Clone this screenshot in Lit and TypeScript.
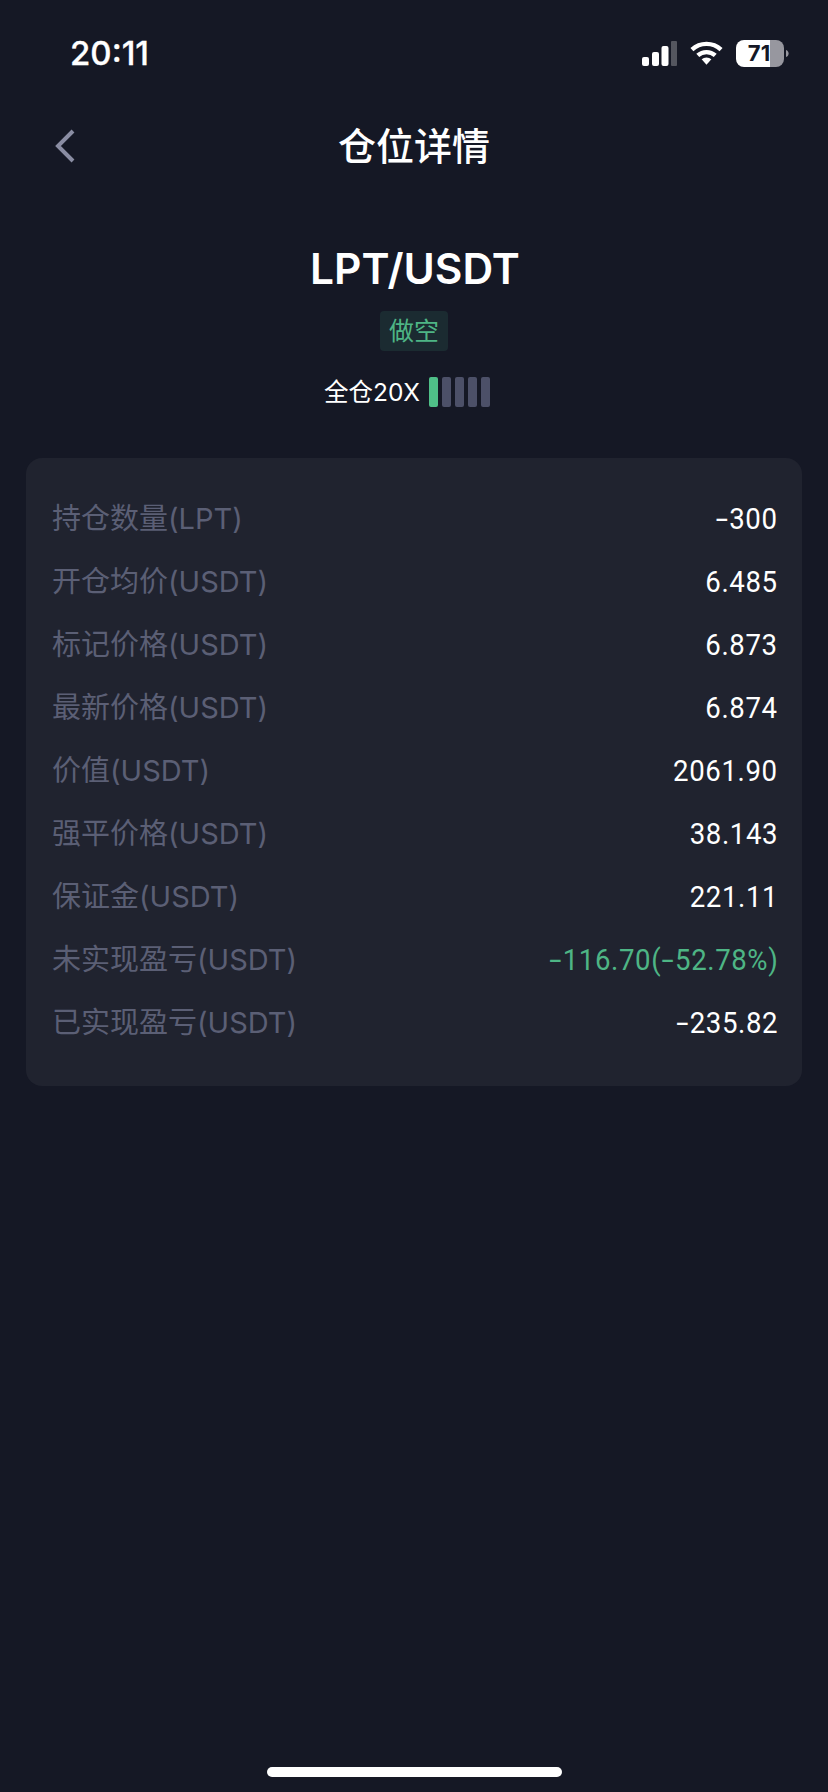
import { LitElement, html, css, svg } from "lit";
import { customElement } from "lit/decorators.js";

const rows: [string, string, boolean?][] = [
  ["持仓数量(LPT)", "-300"],
  ["开仓均价(USDT)", "6.485"],
  ["标记价格(USDT)", "6.873"],
  ["最新价格(USDT)", "6.874"],
  ["价值(USDT)", "2061.90"],
  ["强平价格(USDT)", "38.143"],
  ["保证金(USDT)", "221.11"],
  ["未实现盈亏(USDT)", "-116.70(-52.78%)", true],
  ["已实现盈亏(USDT)", "-235.82"],
];

@customElement("app-root")
export class AppRoot extends LitElement {
  static styles = css`
    :host {
      display: block;
      width: 828px;
      height: 1792px;
      background: #151825;
      color: #fff;
      font-family: Inter, "Noto Sans CJK SC", sans-serif;
      overflow: hidden;
    }
    .page { display: flex; flex-direction: column; height: 1792px; }
    .status {
      height: 54px;
      padding: 26px 38px 0 70px;
      display: flex;
      justify-content: space-between;
      align-items: center;
    }
    .time { font-size: 33px; font-weight: 500; font-family: Inter, sans-serif; -webkit-text-stroke: 0.3px #fff; }
    .icons { display: flex; align-items: center; gap: 13px; }
    .battery { position: relative; width: 54px; height: 27px; display: block; }
    .battery-num {
      position: absolute; inset: 0 8px 0 0;
      display: flex; align-items: center; justify-content: center;
      color: #151825; font-size: 22px; font-weight: 700; line-height: 27px;
    }
    .nav {
      margin-top: 34px;
      height: 64px;
      display: flex;
      align-items: center;
      justify-content: center;
      position: relative;
    }
    .back { position: absolute; left: 53px; top: 15px; width: 26px; height: 34px; display: block; }
    .title { font-size: 38px; font-weight: 500; line-height: 64px; }
    .head { display: flex; flex-direction: column; align-items: center; margin-top: 65px; }
    .pair { font-size: 42.5px; font-weight: 600; line-height: 52px; padding-left: 2px; }
    .tag {
      margin-top: 16px;
      width: 68px; height: 40px;
      border-radius: 4px;
      background: #1b2b31;
      color: #4eb585;
      font-size: 25px;
      display: flex; align-items: center; justify-content: center;
      line-height: 40px;
    }
    .lev { margin-top: 26px; display: flex; align-items: center; height: 30px; margin-right: 14px; }
    .lev-text { font-size: 24.5px; line-height: 30px; }
    .bars { display: flex; gap: 4px; margin-left: 9px; }
    .bar { width: 9px; height: 30px; border-radius: 2px; background: #4c5068; }
    .bar.on { background: #4fbf88; }
    .card {
      margin: 51px 26px 0;
      height: 628px;
      box-sizing: border-box;
      padding: 26px 24px 0 26px;
      background: #20232f;
      border-radius: 16px;
    }
    .row {
      height: 63px;
      display: flex;
      align-items: center;
      justify-content: space-between;
    }
    .label { font-size: 29px; color: #5b5f75; }
    .value {
      display: block;
      font-size: 30px;
      font-family: Roboto, sans-serif;
      letter-spacing: 0.66px;
      color: #fff;
      padding-top: 6px;
      transform: scaleX(0.92);
      transform-origin: right center;
    }
    .dash { display: inline-block; margin: 0 3px; transform: scaleX(1.6); }
    .value.green { color: #4eb585; }
    .spacer { flex: 1; }
    .home {
      width: 295px; height: 10px; border-radius: 5px; background: #fff;
      margin: 0 auto 15px;
    }
  `;

  private amount(v: string) {
    return v.split(/(-)/).map((p) => (p === "-" ? html`<span class="dash">-</span>` : p));
  }

  render() {
    return html`<div class="page">
      <div class="status">
        <span class="time">20:11</span>
        <div class="icons">
          <svg width="35" height="25" viewBox="0 0 35 25">
            <rect x="0" y="16" width="7" height="9" rx="2" fill="#fff"/>
            <rect x="10" y="11" width="7" height="14" rx="2" fill="#fff"/>
            <rect x="19.500" y="5" width="7" height="20" rx="2" fill="#fff"/>
            <rect x="29" y="0" width="6" height="25" rx="1" fill="#54565f"/>
          </svg>
          <svg width="33" height="25" viewBox="0 0 34 25">
            <path d="M2 8.500A22 22 0 0 1 32 8.500" fill="none" stroke="#fff" stroke-width="4.500" stroke-linecap="butt"/>
            <path d="M8 14.500A13.500 13.500 0 0 1 26 14.500" fill="none" stroke="#fff" stroke-width="4.500"/>
            <path d="M12 18.500A7.500 7.500 0 0 1 22 18.500L17 24Z" fill="#fff"/>
          </svg>
          <span class="battery">
            ${svg`<svg width="54" height="27" viewBox="0 0 54 27" style="position:absolute;inset:0">
              <path d="M8 0H34V27H8A8 8 0 0 1 0 19V8A8 8 0 0 1 8 0Z" fill="#fff"/>
              <path d="M34 0H40A8 8 0 0 1 48 8V19A8 8 0 0 1 40 27H34Z" fill="#97979f"/>
              <path d="M50 10C53.500 11 53.500 16 50 17Z" fill="#97979f"/>
            </svg>`}
            <span class="battery-num">71</span>
          </span>
        </div>
      </div>
      <div class="nav">
        <svg class="back" viewBox="0 0 26 34"><path d="M20 2L5 17L20 32" fill="none" stroke="#8a8da3" stroke-width="4"/></svg>
        <span class="title">仓位详情</span>
      </div>
      <div class="head">
        <div class="pair">LPT/USDT</div>
        <div class="tag">做空</div>
        <div class="lev">
          <span class="lev-text">全仓20X</span>
          <div class="bars">
            <span class="bar on"></span><span class="bar"></span><span class="bar"></span><span class="bar"></span><span class="bar"></span>
          </div>
        </div>
      </div>
      <div class="card">
        ${rows.map(([l, v, g]) => html`<div class="row"><span class="label">${l}</span><span class="value ${g ? "green" : ""}">${this.amount(v)}</span></div>`)}
      </div>
      <div class="spacer"></div>
      <div class="home"></div>
    </div>`;
  }
}
